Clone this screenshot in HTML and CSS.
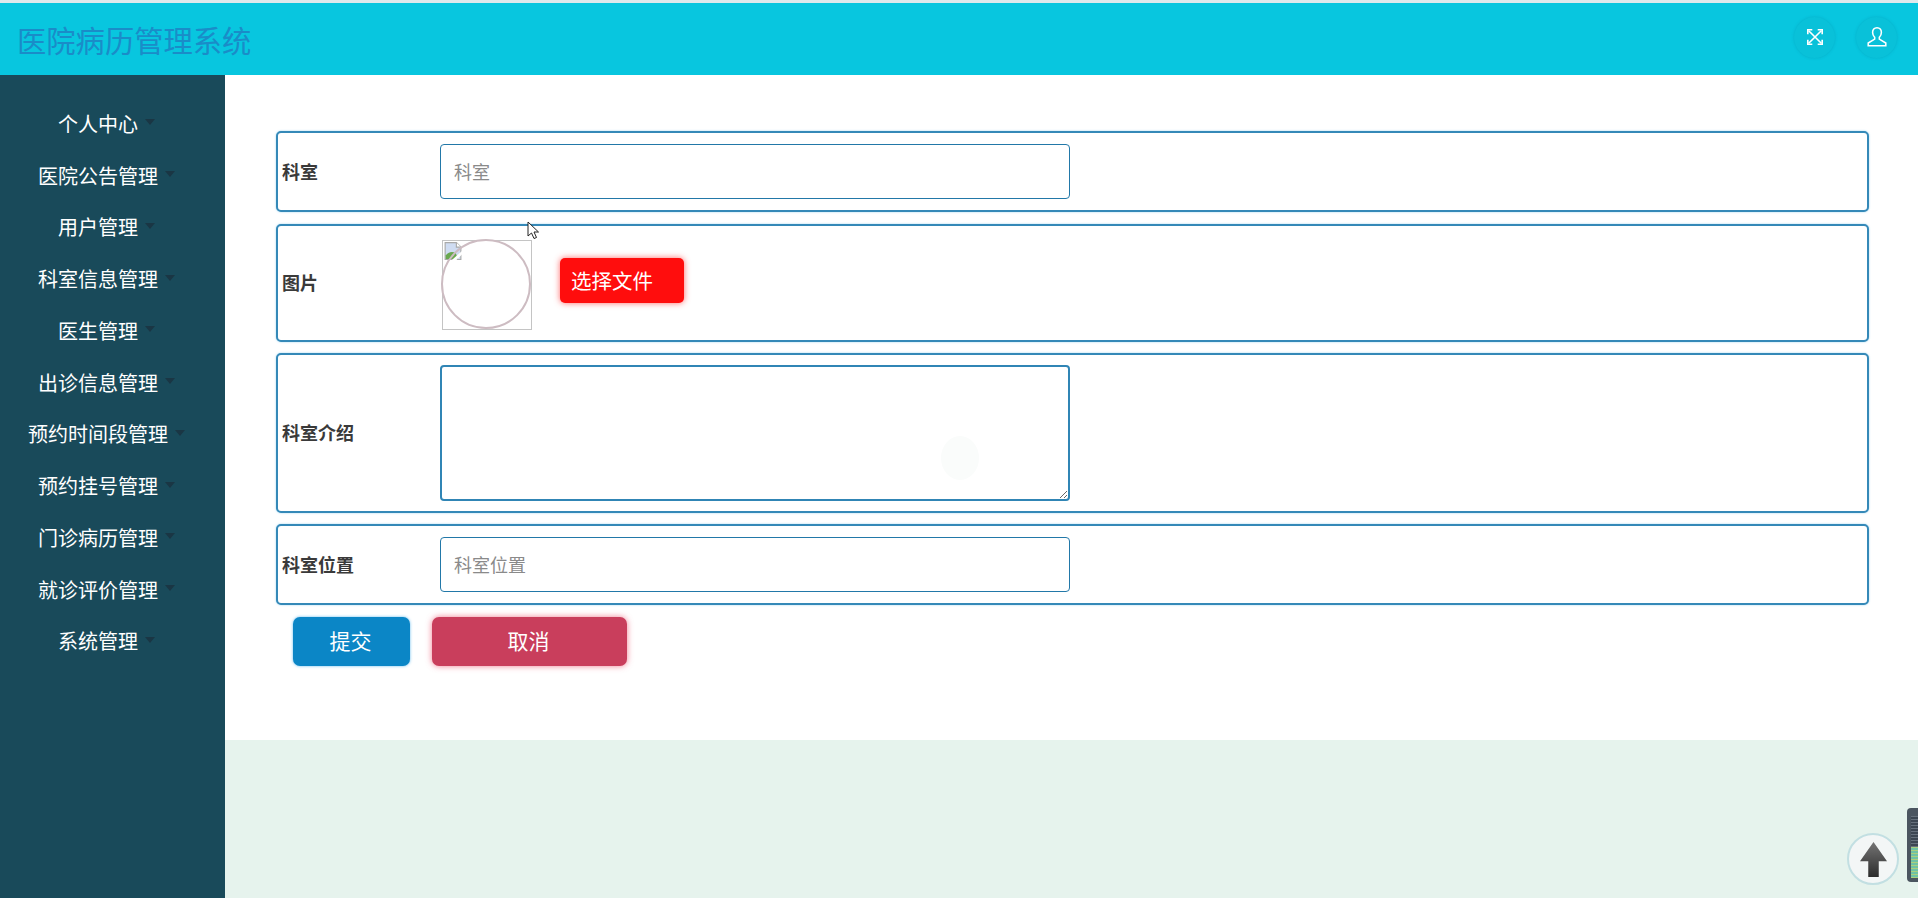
FILE: index.html
```html
<!DOCTYPE html>
<html lang="zh-CN">
<head>
  <meta charset="UTF-8">
  <title>医院病历管理系统</title>
  <link rel="stylesheet" href="styles.css">
</head>
<body>
  <header class="topbar">
    <div class="brand">医院病历管理系统</div>
    <div class="top-actions">
      <span class="round-btn">
        <svg viewBox="0 0 20 20" width="18" height="18" fill="none" stroke="#fff" stroke-width="1.8">
          <path d="M3 3l14 14M17 3L3 17"/>
          <path d="M2 7V2h5M13 2h5v5M18 13v5h-5M7 18H2v-5"/>
        </svg>
      </span>
      <span class="round-btn">
        <svg viewBox="0 0 20 20" width="22" height="22" fill="none" stroke="#fff" stroke-width="1.4">
          <path d="M10 1.5c-2.6 0-4 1.9-4 4.2 0 2 .8 3.6 1.900 4.6v1.600L2 15.500V18h16v-2.500l-5.900-3.600v-1.600c1.100-1 1.900-2.600 1.900-4.600 0-2.300-1.400-4.200-4-4.200z"/>
        </svg>
      </span>
    </div>
  </header>

  <div class="layout">
    <nav class="sidebar">
      <a class="nav-item">个人中心<i class="caret"></i></a>
      <a class="nav-item">医院公告管理<i class="caret"></i></a>
      <a class="nav-item">用户管理<i class="caret"></i></a>
      <a class="nav-item">科室信息管理<i class="caret"></i></a>
      <a class="nav-item">医生管理<i class="caret"></i></a>
      <a class="nav-item">出诊信息管理<i class="caret"></i></a>
      <a class="nav-item">预约时间段管理<i class="caret"></i></a>
      <a class="nav-item">预约挂号管理<i class="caret"></i></a>
      <a class="nav-item">门诊病历管理<i class="caret"></i></a>
      <a class="nav-item">就诊评价管理<i class="caret"></i></a>
      <a class="nav-item">系统管理<i class="caret"></i></a>
    </nav>

    <main class="content">
      <form class="panel">
        <div class="form-row">
          <label class="form-label">科室</label>
          <input class="form-input" type="text" placeholder="科室">
        </div>
        <div class="form-row row-image">
          <label class="form-label">图片</label>
          <div class="avatar">
            <svg class="broken-img" viewBox="0 0 16 16" width="18" height="18">
              <path d="M1 .5h10l4 4v11H1z" fill="#cfdcf2" stroke="#a9a9a9"/>
              <path d="M11 .5v4h4" fill="#fff" stroke="#a9a9a9"/>
              <path d="M1.500 15v-3c2-3 6-4 9-2l2 5z" fill="#6aa84f"/>
              <path d="M7 16L16 8v3l-5 5z" fill="#fff"/>
            </svg>
          </div>
          <button class="btn-file" type="button">选择文件</button>
        </div>
        <div class="form-row row-text">
          <label class="form-label">科室介绍</label>
          <textarea class="form-textarea"></textarea>
        </div>
        <div class="form-row">
          <label class="form-label">科室位置</label>
          <input class="form-input" type="text" placeholder="科室位置">
        </div>
        <div class="form-actions">
          <button class="btn btn-submit" type="button">提交</button>
          <button class="btn btn-cancel" type="button">取消</button>
        </div>
      </form>
      <div class="footer-band"></div>
    </main>
  </div>

  <!-- things floating over the page -->
  <span class="ghost-spot"></span>
  <svg class="pointer" viewBox="0 0 13 19" width="13" height="19">
    <path d="M1 1v14l3.500-3 2.500 5.500 2.500-1-2.500-5.500h4.500z" fill="#fff" stroke="#222" stroke-width="1"/>
  </svg>
  <div class="side-widget">
    <div class="widget-lines"></div>
    <div class="widget-lines green"></div>
  </div>
  <a class="back-top">
    <svg viewBox="0 0 36 40" preserveAspectRatio="none">
      <defs>
        <linearGradient id="arrowFill" x1="0" y1="0" x2="0" y2="1">
          <stop offset="0" stop-color="#747474"/>
          <stop offset="1" stop-color="#2c2c2c"/>
        </linearGradient>
      </defs>
      <path d="M18 0L36 22H25V40H11V22H0z" fill="url(#arrowFill)"/>
    </svg>
  </a>
</body>
</html>
```

FILE: styles.css
```css
* {
  box-sizing: border-box;
}
html, body {
  height: 100%;
}
body {
  margin: 0;
  overflow: hidden;
  display: flex;
  flex-direction: column;
  font-family: "Liberation Sans", "Noto Sans CJK SC", sans-serif;
  color: #333;
  background: #fff;
}
.topbar {
  flex: none;
  height: 75px;
  display: flex;
  align-items: center;
  justify-content: space-between;
  padding: 0 21px 0 17px;
  background: #08c6df;
  border-top: 3px solid #dfe9ec;
}
.brand {
  font-size: 29.3px;
  color: #1a8cc8;
}
.top-actions {
  display: flex;
  gap: 21px;
  margin-bottom: 4px;
}
.round-btn {
  width: 41px;
  height: 41px;
  border-radius: 50%;
  display: flex;
  align-items: center;
  justify-content: center;
  background: #09c1d9;
  box-shadow: 0 0 3px rgba(0, 120, 150, .3);
}
.layout {
  flex: 1;
  display: flex;
  min-height: 0;
}
.sidebar {
  flex: none;
  width: 225px;
  padding: 22.6px 12px 0 0;
  background: #194a5a;
}
.nav-item {
  display: flex;
  align-items: center;
  justify-content: center;
  height: 51.75px;
  font-size: 20px;
  color: #fff;
}
.caret {
  width: 0;
  height: 0;
  margin: -2px 0 0 7px;
  border-top: 6px solid #1a3644;
  border-left: 5px solid transparent;
  border-right: 5px solid transparent;
}
.content {
  flex: 1;
  display: flex;
  flex-direction: column;
  min-width: 0;
}
.panel {
  flex: none;
  height: 665px;
  padding: 56px 49px 0 51px;
  display: flex;
  flex-direction: column;
  gap: 12px;
  background: #fff;
}
.footer-band {
  flex: 1;
  background: #e6f3ed;
}
.form-row {
  flex: none;
  height: 81px;
  display: flex;
  align-items: center;
  padding: 0 4px;
  background: #fff;
  border: 2px solid #3589b8;
  border-radius: 5px;
  box-shadow: 0 0 2px rgba(80, 180, 230, .6);
}
.row-image {
  height: 118px;
  margin-bottom: -1px;
}
.row-text {
  height: 160px;
  margin-bottom: -1px;
}
.form-label {
  flex: none;
  width: 158px;
  margin-top: -2px;
  font-size: 18px;
  font-weight: bold;
  color: #3a3a3a;
}
.form-input,
.form-textarea {
  display: block;
  width: 630px;
  font-family: inherit;
  font-size: 18px;
  color: #333;
  background: #fff;
  border: 1px solid #2278a8;
  border-radius: 4px;
}
.form-input {
  height: 55px;
  padding: 3px 13px 0;
}
.form-textarea {
  height: 136px;
  border: 2px solid #3085b5;
}
.form-input::placeholder {
  color: #8a8a8a;
}
.avatar {
  position: relative;
  width: 90px;
  height: 90px;
  margin: 4px 0 0 2px;
  border: 1px solid #c4c4c4;
}
.avatar::after {
  content: "";
  position: absolute;
  top: -2px;
  left: -2px;
  width: 86px;
  height: 86px;
  border: 2px solid #cdbcc2;
  border-radius: 50%;
}
.broken-img {
  display: block;
  margin: 1px 0 0 1px;
}
.btn-file {
  width: 124px;
  height: 45px;
  margin: -5px 0 0 28px;
  padding: 0 0 2px 11px;
  text-align: left;
  font-family: inherit;
  font-size: 20.5px;
  color: #fff;
  background: #ff0d0d;
  border: 0;
  border-radius: 5px;
  box-shadow: 0 0 6px rgba(255, 40, 40, .7);
}
.form-actions {
  display: flex;
  gap: 22px;
  padding-left: 17px;
}
.btn {
  height: 49px;
  padding: 0 8px 4px 6px;
  font-family: inherit;
  font-size: 21px;
  color: #fff;
  border: 0;
  border-radius: 7px;
}
.btn-submit {
  width: 117px;
  background: #0b86c6;
  box-shadow: 0 0 3px rgba(60, 170, 235, .8);
}
.btn-cancel {
  width: 195px;
  background: #c93e5c;
  box-shadow: 0 0 6px rgba(235, 70, 100, .7);
}
.ghost-spot {
  position: fixed;
  left: 941px;
  top: 436px;
  width: 38px;
  height: 44px;
  border-radius: 50%;
  background: #fafcfb;
}
.pointer {
  position: fixed;
  left: 527px;
  top: 221px;
}
.back-top {
  position: fixed;
  left: 1847px;
  top: 833px;
  width: 52px;
  height: 52px;
  display: flex;
  align-items: center;
  justify-content: center;
  border-radius: 50%;
  background: #f3f6f6;
  border: 2px solid #c2dfe2;
}
.back-top svg {
  width: 27px;
  height: 35px;
}
.side-widget {
  position: fixed;
  left: 1907px;
  top: 808px;
  width: 14px;
  height: 74px;
  padding: 8px 0 4px 4px;
  display: flex;
  flex-direction: column;
  background: #4b5560;
  border-radius: 4px 0 0 4px;
}
.widget-lines {
  flex: 1;
  background: repeating-linear-gradient(#66707c 0 1px, #3c4652 1px 3px);
}
.widget-lines.green {
  background: repeating-linear-gradient(#a9cf7e 0 1px, #6fc2a5 1px 3px);
}
```
